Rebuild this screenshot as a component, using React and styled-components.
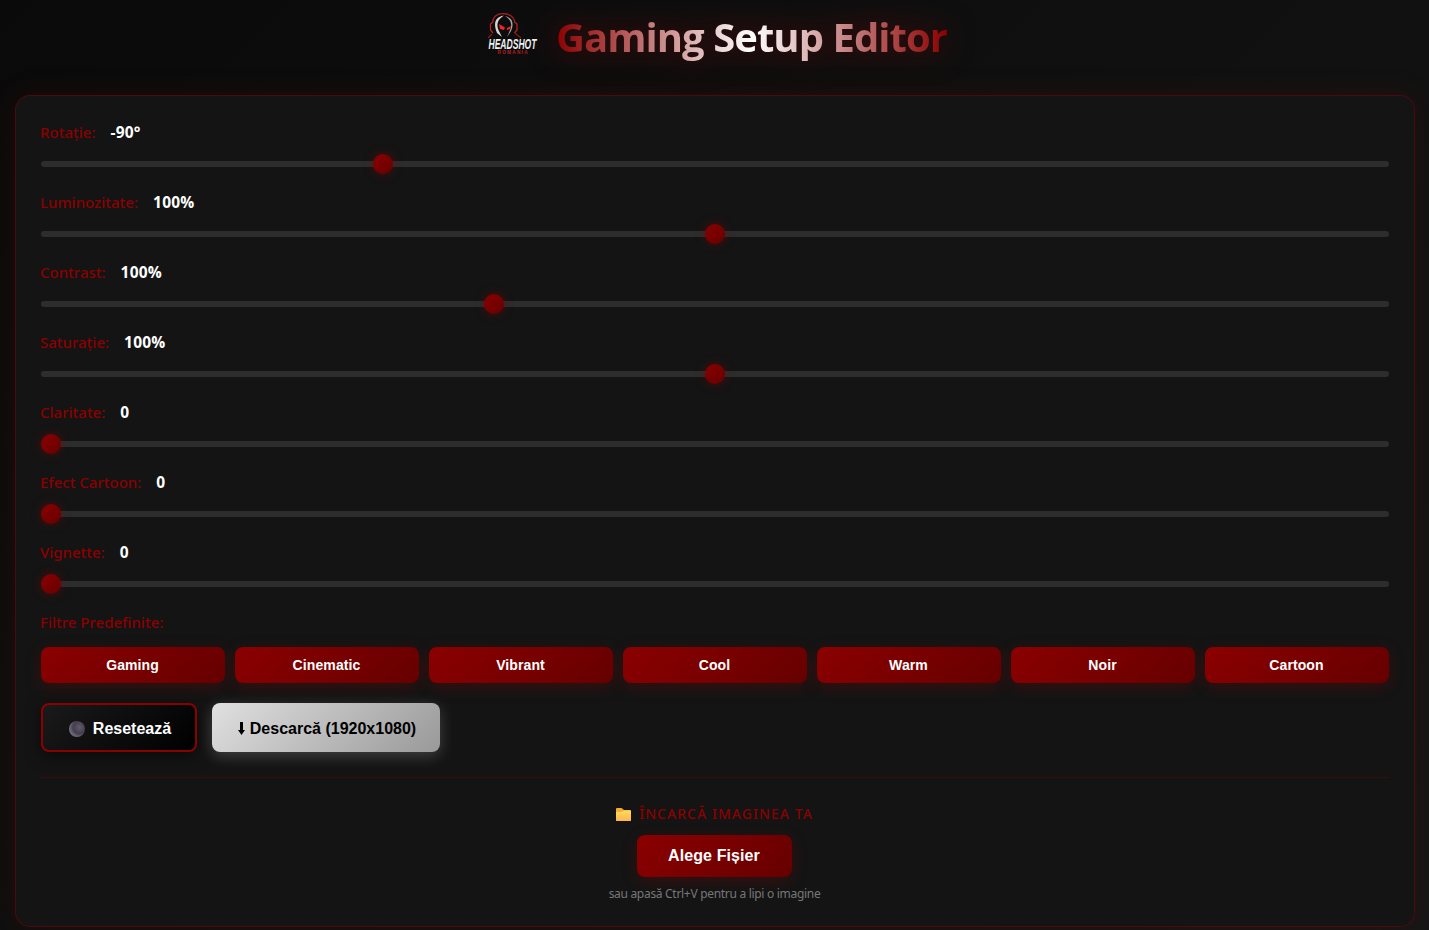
import React, { useState } from 'react';
import styled, { createGlobalStyle } from 'styled-components';

const GlobalStyle = createGlobalStyle`
  * { box-sizing: border-box; }
  html { background: #0a0a0a; }
  body {
    margin: 0;
    height: 930px;
    overflow: hidden;
    color: #fff;
    font-family: "Segoe UI", "Noto Sans", "Open Sans", sans-serif;
    background: linear-gradient(135deg, #0a0a0a 0%, #1a1a1a 100%) 0 0 / 100% 1800px no-repeat;
  }
`;

const Page = styled.div`
  height: 930px;
  padding: 0 14px 0 15px;
  display: flex;
  flex-direction: column;
`;

const Header = styled.header`
  height: 95px;
  flex: none;
  display: flex;
  justify-content: center;
  align-items: flex-start;
  gap: 14px;
  padding-right: 1px;
`;

const Logo = styled.svg`
  width: 60px;
  height: 60px;
  margin-top: 4px;
  overflow: visible;
`;

const Title = styled.h1`
  margin: 8px 0 0;
  font-family: "Segoe UI", "Open Sans", sans-serif;
  font-size: 40px;
  font-weight: 700;
  line-height: 58px;
  white-space: nowrap;
  letter-spacing: -0.95px;
  color: transparent;
  background: linear-gradient(90deg, #8b0000, #ffffff, #8b0000);
  background-clip: text;
  -webkit-background-clip: text;
  filter: drop-shadow(0 0 15px rgba(139, 0, 0, 0.5));
`;

const Panel = styled.main`
  height: 832px;
  flex: none;
  padding: 25px;
  display: flex;
  flex-direction: column;
  background: #141414;
  border: 1px solid rgba(139, 0, 0, 0.45);
  border-radius: 15px;
  box-shadow: 0 0 30px rgba(139, 0, 0, 0.15);
`;

const Control = styled.div`
  height: 70px;
  flex: none;
  display: flex;
  flex-direction: column;
  gap: 10px;
`;

const LabelRow = styled.div`
  height: 23px;
  flex: none;
  display: flex;
  align-items: center;
  gap: 15px;
  margin-left: -1px;
  white-space: nowrap;
`;

const Label = styled.label`
  font-size: 15px;
  font-weight: 500;
  line-height: 23px;
  color: #8b0000;
`;

const Value = styled.span`
  font-family: "Segoe UI", "Open Sans", sans-serif;
  font-size: 15.500px;
  font-weight: 700;
  line-height: 23px;
  color: #fff;
  letter-spacing: 0.2px;
`;

const Slider = styled.input`
  appearance: none;
  -webkit-appearance: none;
  width: 100%;
  height: 20px;
  margin: 0;
  background: transparent;
  outline: none;

  &::-webkit-slider-runnable-track {
    height: 6px;
    border-radius: 3px;
    background: #2d2d2d;
  }

  &::-webkit-slider-thumb {
    -webkit-appearance: none;
    width: 20px;
    height: 20px;
    margin-top: -7px;
    border-radius: 50%;
    background: linear-gradient(135deg, #8b0000, #660000);
    box-shadow: 0 0 10px rgba(139, 0, 0, 0.5);
  }
`;

const Presets = styled.div`
  display: grid;
  grid-template-columns: repeat(7, 1fr);
  gap: 10px;
  margin-top: 13px;
`;

const RedButton = styled.button`
  height: ${(p) => (p.$large ? '42px' : '36px')};
  width: ${(p) => (p.$large ? '155px' : 'auto')};
  flex: none;
  padding: 0 1px 0 0;
  border: 0;
  border-radius: 8px;
  color: #fff;
  font-family: Arial, "Liberation Sans", sans-serif;
  font-size: ${(p) => (p.$large ? '16px' : '14px')};
  font-weight: 700;
  letter-spacing: 0.1px;
  background: linear-gradient(135deg, #8b0000, #660000);
  box-shadow: 0 4px 15px rgba(139, 0, 0, 0.3);
`;

const Actions = styled.div`
  display: flex;
  gap: 15px;
  margin-top: 20px;
`;

const ActionButton = styled.button`
  height: 49px;
  padding: 2px 0 0 2px;
  display: flex;
  align-items: center;
  justify-content: center;
  border-radius: 8px;
  font-family: Arial, "Liberation Sans", sans-serif;
  font-size: 16px;
  font-weight: 700;
  white-space: nowrap;
`;

const ResetButton = styled(ActionButton)`
  width: 156px;
  gap: 8px;
  color: #fff;
  border: 2px solid #8b0000;
  background: linear-gradient(135deg, #1a1a1a, #000);
  box-shadow: 0 4px 15px rgba(0, 0, 0, 0.5);
`;

const DownloadButton = styled(ActionButton)`
  width: 228px;
  gap: 5px;
  color: #000;
  border: 0;
  background: linear-gradient(135deg, #e0e0e0, #999);
  box-shadow: 0 4px 15px rgba(255, 255, 255, 0.2);
`;

const Upload = styled.section`
  margin-top: 25px;
  padding: 24px 1px 0 0;
  border-top: 1px solid rgba(139, 0, 0, 0.3);
  display: flex;
  flex-direction: column;
  align-items: center;
`;

const UploadTitle = styled.div`
  height: 23px;
  display: flex;
  align-items: center;
  gap: 8px;
  font-size: 14px;
  font-weight: 500;
  color: #8b0000;
  letter-spacing: 1.050px;
  margin-bottom: 10px;
  white-space: nowrap;

  svg { position: relative; top: 1px; }
`;

const Hint = styled.div`
  margin-top: 8px;
  font-size: 12px;
  line-height: 18px;
  letter-spacing: -0.3px;
  color: #777;
  white-space: nowrap;
`;

const LogoText = styled.text`
  font-family: "Liberation Sans", Arial, sans-serif;
  font-weight: 700;
  font-style: ${(p) => (p.$italic ? 'italic' : 'normal')};
  letter-spacing: ${(p) => p.$spacing || '0'};
`;

const CONTROLS = [
  { name: 'Rotație:', min: -180, max: 180, value: -90, unit: '°' },
  { name: 'Luminozitate:', min: 0, max: 200, value: 100, unit: '%' },
  { name: 'Contrast:', min: 50, max: 200, value: 100, unit: '%' },
  { name: 'Saturație:', min: 0, max: 200, value: 100, unit: '%' },
  { name: 'Claritate:', min: 0, max: 100, value: 0, unit: '' },
  { name: 'Efect Cartoon:', min: 0, max: 100, value: 0, unit: '' },
  { name: 'Vignette:', min: 0, max: 100, value: 0, unit: '' },
];

const PRESETS = ['Gaming', 'Cinematic', 'Vibrant', 'Cool', 'Warm', 'Noir', 'Cartoon'];

function HeadshotLogo() {
  return (
    <Logo viewBox="0 0 60 60" fill="none">
      <path d="M10.500 19C11 12 16 9.700 21 9.700C27 9.700 32 12 33 19" stroke="#a81d20" strokeWidth="1.200" />
      <path d="M11 18L8.500 20V26L11 29M32.500 18L35 20V26L32.500 29" stroke="#b52226" strokeWidth="1.300" />
      <path d="M10 30L6 34M33 29L39 34" stroke="#8b1719" strokeWidth="1.200" />
      <path d="M15 29C11 19 13 13 22 11.500C16 15 14 20 16.500 26L20 33Z" fill="#d5d5d5" />
      <path d="M23 12C31 14 32 20 29 27L25 33L28.500 25C30.500 19 28 15 23 12Z" fill="#aaa" />
      <path d="M17 20L23 23.500L22 26L18 25ZM29 22L25 24L25 26L28 25Z" fill="#f02428" />
      <LogoText $italic transform="translate(6.500 45) scale(0.590 1)" fontSize="14.500" fill="#f0f0f0">HEADSHOT</LogoText>
      <LogoText $spacing="1.200px" x="15.500" y="49.800" fontSize="4.800" fill="#b91d22">ROMANIA</LogoText>
    </Logo>
  );
}

function MoonIcon() {
  return (
    <svg width="16" height="16" viewBox="0 0 16 16">
      <defs>
        <radialGradient id="moon" cx="0.650" cy="0.400" r="0.650">
          <stop offset="0" stopColor="#625b6b" />
          <stop offset="0.600" stopColor="#443d50" />
          <stop offset="1" stopColor="#77717d" />
        </radialGradient>
      </defs>
      <circle cx="8" cy="8" r="8" fill="url(#moon)" />
    </svg>
  );
}

function ArrowIcon() {
  return (
    <svg width="7" height="13" viewBox="0 0 7 13">
      <path d="M2 0H5V8H7L3.500 13L0 8H2Z" fill="#000" />
    </svg>
  );
}

function FolderIcon() {
  return (
    <svg width="15" height="13" viewBox="0 0 15 13">
      <defs>
        <linearGradient id="folder" x1="0" y1="0" x2="0" y2="1">
          <stop offset="0" stopColor="#ffdc55" />
          <stop offset="1" stopColor="#ffb455" />
        </linearGradient>
      </defs>
      <path d="M0 1Q0 0 1 0H5.500L8 2H14Q15 2 15 3V12Q15 13 14 13H1Q0 13 0 12Z" fill="#f5ac35" />
      <path d="M0 4H5.500L8 2.500H14Q15 2.500 15 3.500V12Q15 13 14 13H1Q0 13 0 12Z" fill="url(#folder)" />
    </svg>
  );
}

function RangeControl({ name, min, max, value: initial, unit }) {
  const [value, setValue] = useState(initial);
  return (
    <Control>
      <LabelRow>
        <Label>{name}</Label>
        <Value>{value}{unit}</Value>
      </LabelRow>
      <Slider type="range" min={min} max={max} value={value} onChange={(e) => setValue(Number(e.target.value))} />
    </Control>
  );
}

export default function App() {
  return (
    <>
      <GlobalStyle />
      <Page>
        <Header>
          <HeadshotLogo />
          <Title>Gaming Setup Editor</Title>
        </Header>
        <Panel>
          {CONTROLS.map((c) => <RangeControl key={c.name} {...c} />)}
          <LabelRow><Label>Filtre Predefinite:</Label></LabelRow>
          <Presets>
            {PRESETS.map((p) => <RedButton key={p}>{p}</RedButton>)}
          </Presets>
          <Actions>
            <ResetButton><MoonIcon />Resetează</ResetButton>
            <DownloadButton><ArrowIcon />Descarcă (1920x1080)</DownloadButton>
          </Actions>
          <Upload>
            <UploadTitle><FolderIcon />ÎNCARCĂ IMAGINEA TA</UploadTitle>
            <RedButton $large>Alege Fișier</RedButton>
            <Hint>sau apasă Ctrl+V pentru a lipi o imagine</Hint>
          </Upload>
        </Panel>
      </Page>
    </>
  );
}
